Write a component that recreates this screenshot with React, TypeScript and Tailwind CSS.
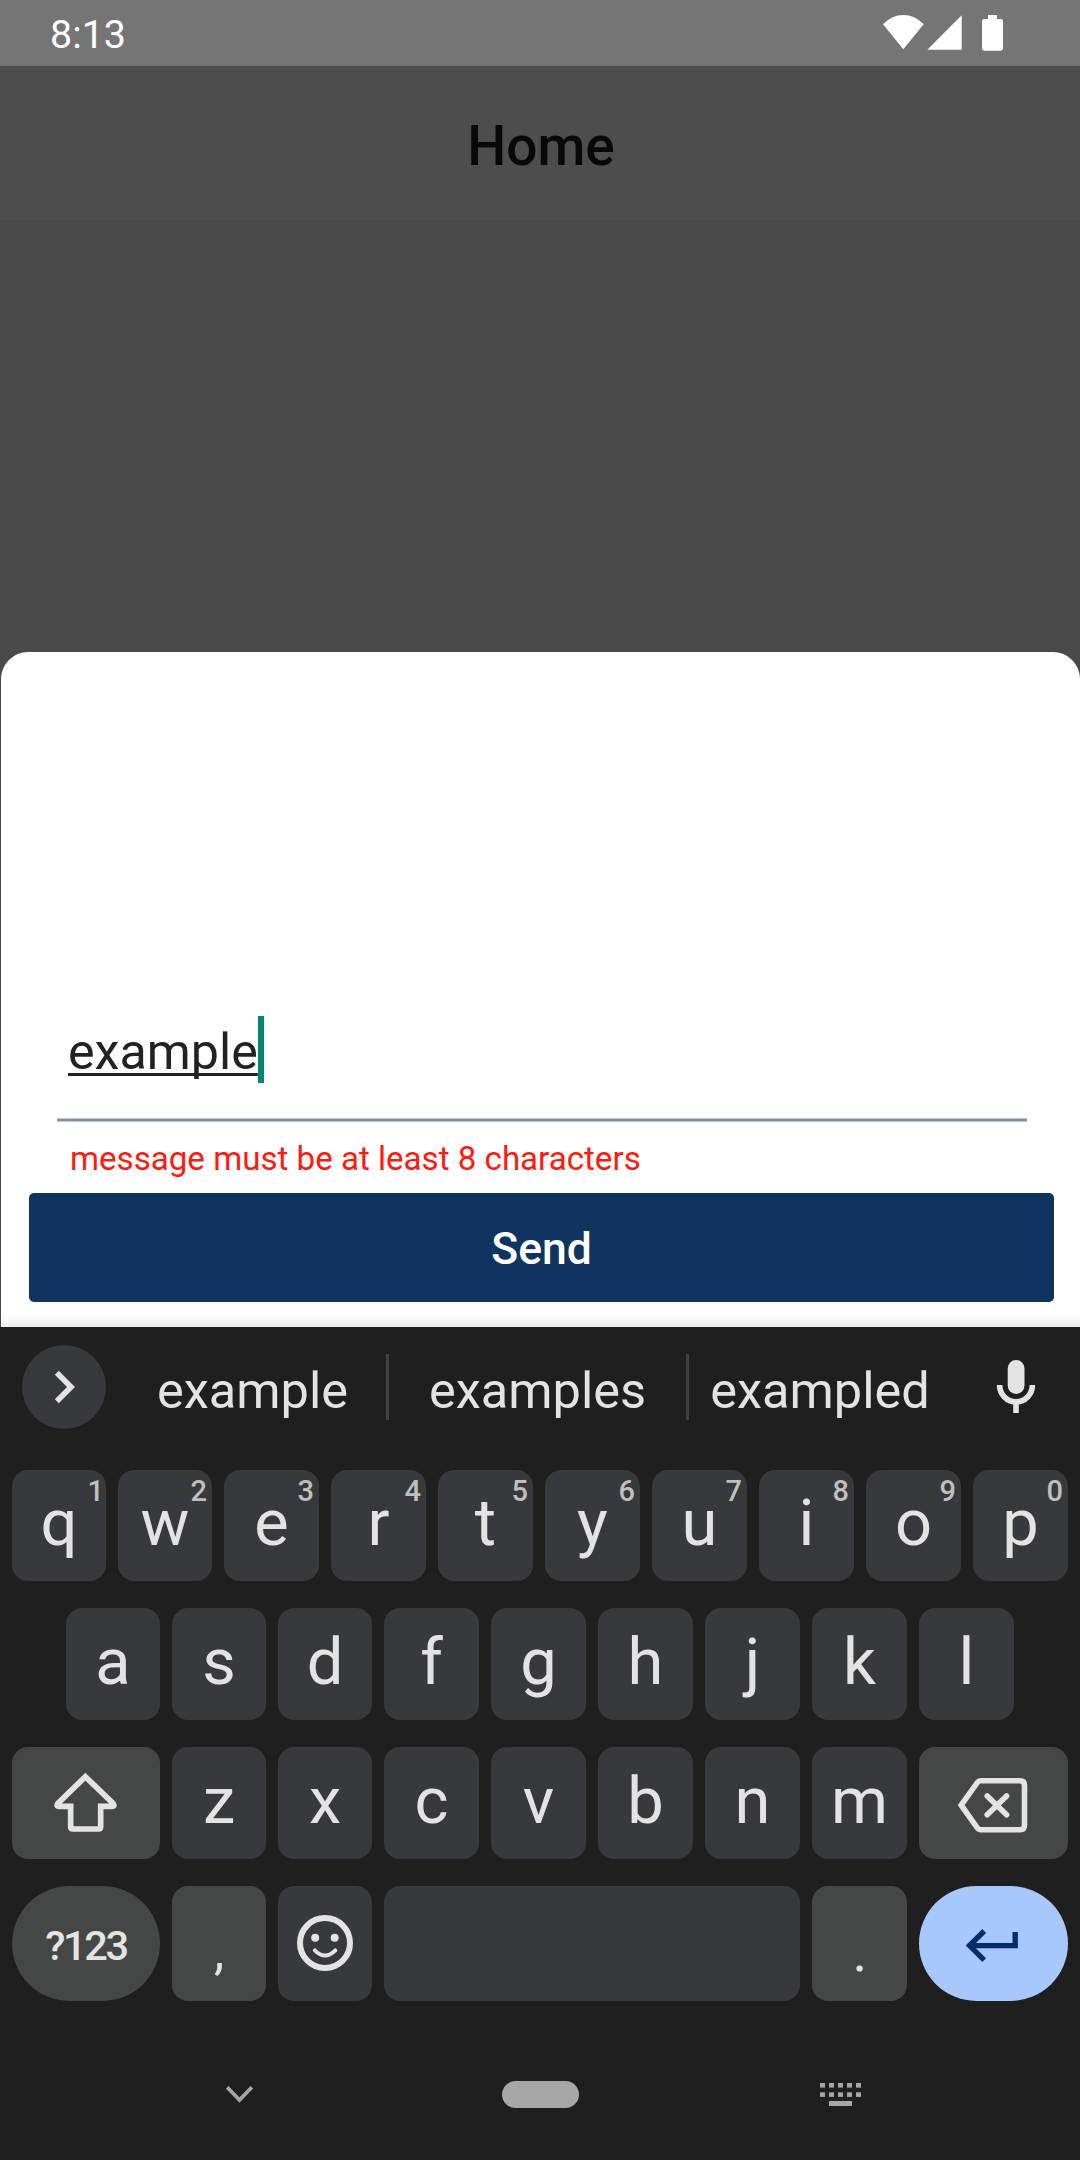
import type { ReactNode } from "react";

type KeyProps = { width: string; tone?: string; shape?: string; hint?: string; children?: ReactNode };

function Key({ width, tone = "bg-[#38393c]", shape = "rounded-[16px]", hint, children }: KeyProps) {
  return (
    <div className={`relative flex h-full shrink-0 items-center justify-center ${width} ${tone} ${shape}`}>
      {children}
      {hint && (
        <span
          className={`absolute top-[4px] text-[29px] leading-[34px] font-medium text-[#bfbfbf] ${hint === "1" ? "right-[2px]" : "right-[5px]"}`}
        >
          {hint}
        </span>
      )}
    </div>
  );
}

function Letter({ children, lift = "pb-[4px]" }: { children: string; lift?: string }) {
  return <span className={`text-[65px] leading-[76px] ${lift}`}>{children}</span>;
}

const topRow = ["q", "w", "e", "r", "t", "y", "u", "i", "o", "p"];
const middleRow = ["a", "s", "d", "f", "g", "h", "j", "k", "l"];
const bottomRow = ["z", "x", "c", "v", "b", "n", "m"];

function StatusBar() {
  return (
    <div className="flex h-[66px] items-center justify-between bg-[#757575] pl-[50px] text-white">
      <span className="pt-[4px] text-[39.4px] leading-[46px]">8:13</span>
      <svg className="h-[66px] w-[200px]" viewBox="480 0 600 198" fill="currentColor">
        <path d="M489 73A80.4 80.4 0 0 1 611 73L550 148Z" />
        <path d="M725 46V149H622Z" />
        <rect x="786" y="57" width="63" height="95" rx="7" />
        <rect x="804" y="45" width="27" height="14" />
      </svg>
    </div>
  );
}

function MessageSheet() {
  return (
    <div className="ml-px flex h-[675px] shrink-0 flex-col rounded-t-[27px] bg-white">
      <div className="mt-[364px] flex h-[67px] items-start pl-[67px]">
        <span className="pt-[7px] text-[50.2px] leading-[58px] text-[#222222] underline decoration-[2.5px] underline-offset-[4px] [text-decoration-skip-ink:none]">
          example
        </span>
        <div className="h-[67px] w-[6px] bg-[#008577]" />
      </div>
      <div className="mt-[35px] mr-[53px] ml-[56px] h-[4px] border-y border-[#c1c7ce] bg-[#85919f]" />
      <div className="flex h-[71px] items-center pt-[3px] pl-[69px] text-[33.12px] leading-[40px] text-[#ff1a0f]">
        <span className="whitespace-nowrap">message must be at least 8 characters</span>
      </div>
      <button className="mr-[26px] ml-[28px] flex h-[109px] items-center justify-center rounded-[5px] bg-[#10345f] pt-[3px] text-[44.5px] leading-[52px] font-medium text-white">
        Send
      </button>
      <div className="mt-[11px] h-[14px] bg-linear-to-b from-white to-[#f0f0f0]" />
    </div>
  );
}

function Suggestions() {
  return (
    <div className="flex h-[143px] items-start pl-[22px] text-[50.5px] leading-[58px]">
      <div className="mt-[18px] size-[84px] shrink-0 rounded-full bg-[#38393c]">
        <svg viewBox="22 1345 84 84" fill="none" stroke="#e3e3e3" strokeWidth="5.6">
          <path d="M56.8 1372.8L71 1387L56.8 1401.2" />
        </svg>
      </div>
      <div className="mt-[35px] w-[280px] shrink-0 pl-[13px] text-center">example</div>
      <div className="mt-[27px] h-[66px] w-[3px] shrink-0 bg-[#404142]" />
      <div className="mt-[35px] w-[297px] shrink-0 text-center">examples</div>
      <div className="mt-[27px] h-[66px] w-[3px] shrink-0 bg-[#404142]" />
      <div className="mt-[35px] w-[262px] shrink-0 text-center">exampled</div>
      <svg className="mt-[27px] h-[66px] w-[129px] shrink-0" viewBox="951 1354 129 66" fill="none">
        <rect x="1007.7" y="1360" width="16.8" height="34" rx="8.4" fill="#e3e3e3" />
        <path d="M999.6 1385A16.4 16.9 0 0 0 1032.4 1385M1016 1401V1413" stroke="#e3e3e3" strokeWidth="5.6" />
      </svg>
    </div>
  );
}

function Keyboard() {
  return (
    <div className="h-[833px] shrink-0 bg-[#1f1f1f] text-[#e3e3e3]">
      <Suggestions />
      <div className="flex h-[111px] gap-[12px] px-[12px]">
        {topRow.map((letter, i) => (
          <Key key={letter} width={i < 2 ? "w-[94px]" : "w-[95px]"} hint={String((i + 1) % 10)}>
            <Letter lift="pb-[6px]">{letter}</Letter>
          </Key>
        ))}
      </div>
      <div className="mt-[27px] flex h-[112px] gap-[12px] pl-[66px]">
        {middleRow.map((letter, i) => (
          <Key key={letter} width={i < 3 ? "w-[94px]" : "w-[95px]"}>
            <Letter>{letter}</Letter>
          </Key>
        ))}
      </div>
      <div className="mt-[27px] flex h-[112px] gap-[12px] px-[12px]">
        <Key width="w-[148px]" tone="bg-[#454746]">
          <svg className="size-full" viewBox="36 141 444 336" fill="none" stroke="#e3e3e3" strokeWidth="17">
            <path d="M256 230L175 309Q166 319 178 319H212V380Q212 387 219 387H295Q302 387 302 380V319H335Q347 319 338 309Z" />
          </svg>
        </Key>
        {bottomRow.map((letter, i) => (
          <Key key={letter} width={i < 2 ? "w-[94px]" : "w-[95px]"}>
            <Letter>{letter}</Letter>
          </Key>
        ))}
        <Key width="w-[149px]" tone="bg-[#454746]">
          <svg className="size-full" viewBox="919 1747 149 112" fill="none" stroke="#e3e3e3" strokeWidth="5.6">
            <path d="M961.2 1805.2L977 1783Q978.5 1780.8 981 1780.8H1020Q1024.5 1780.8 1024.5 1785.3V1825.2Q1024.5 1829.7 1020 1829.7H981Q978.5 1829.7 977 1827.5Z" />
            <path d="M987.2 1796L1006.6 1814.8M1006.6 1796L987.2 1814.8" strokeLinecap="round" />
          </svg>
        </Key>
      </div>
      <div className="mt-[27px] flex h-[115px] gap-[12px] px-[12px]">
        <Key width="w-[148px]" tone="bg-[#454746]" shape="rounded-full">
          <span className="pt-[4px] text-[41.5px] leading-[48px] font-medium tracking-[-2.4px]">?123</span>
        </Key>
        <Key width="w-[94px]" tone="bg-[#454746]">
          <span className="pt-[17px] text-[52px] leading-[64px]">,</span>
        </Key>
        <Key width="w-[94px]">
          <svg className="size-full" viewBox="834 558 282 345" fill="none" stroke="#e3e3e3">
            <circle cx="975" cy="729" r="75" strokeWidth="18" />
            <path d="M944.5 751Q975 782 1006 751" strokeWidth="12" strokeLinecap="round" />
            <circle cx="945.5" cy="713.5" r="12" fill="#e3e3e3" stroke="none" />
            <circle cx="1004" cy="713.5" r="12" fill="#e3e3e3" stroke="none" />
          </svg>
        </Key>
        <Key width="w-[416px]" />
        <Key width="w-[95px]" tone="bg-[#454746]">
          <span className="pt-[17px] pl-px text-[56px] leading-[64px]">.</span>
        </Key>
        <Key width="w-[149px]" tone="bg-[#a8c7fa]" shape="rounded-full">
          <svg className="size-full" viewBox="919 1886 149 115" fill="none" stroke="#062e6f" strokeWidth="5.4">
            <path d="M984.2 1931L969.5 1945.6L984.2 1960.2M969.5 1945.6H1015.2V1932" />
          </svg>
        </Key>
      </div>
      <div className="flex h-[159px] items-start pt-[79px] pl-[224px] text-[#a6a6a6]">
        <svg className="h-[30px] w-[32px]" viewBox="224 2080 32 30" fill="none" stroke="currentColor" strokeWidth="3.8">
          <path d="M227.2 2087.2L239.5 2100L251.8 2087.2" />
        </svg>
        <div className="mt-px ml-[246px] h-[27px] w-[77px] rounded-full bg-[#a6a6a6]" />
        <svg className="ml-[239px] h-[30px] w-[46px]" viewBox="818 2080 46 30" fill="currentColor">
          {[820, 829, 838, 847, 856].map((x) => (
            <g key={x}>
              <rect x={x} y="2083" width="5" height="4.6" />
              <rect x={x} y="2092.3" width="5" height="4.6" />
            </g>
          ))}
          <rect x="829" y="2101" width="23" height="5" />
        </svg>
      </div>
    </div>
  );
}

export default function App() {
  return (
    <div className="flex h-[2160px] w-[1080px] flex-col overflow-hidden bg-[#494949] font-['Roboto',sans-serif]">
      <StatusBar />
      <header className="mb-[432px] flex h-[154px] shrink-0 items-center justify-center bg-[#4d4d4d] pt-[6px] pl-[2px] text-[55px] leading-[64px] font-medium text-[#080808]">
        Home
      </header>
      <MessageSheet />
      <Keyboard />
    </div>
  );
}
